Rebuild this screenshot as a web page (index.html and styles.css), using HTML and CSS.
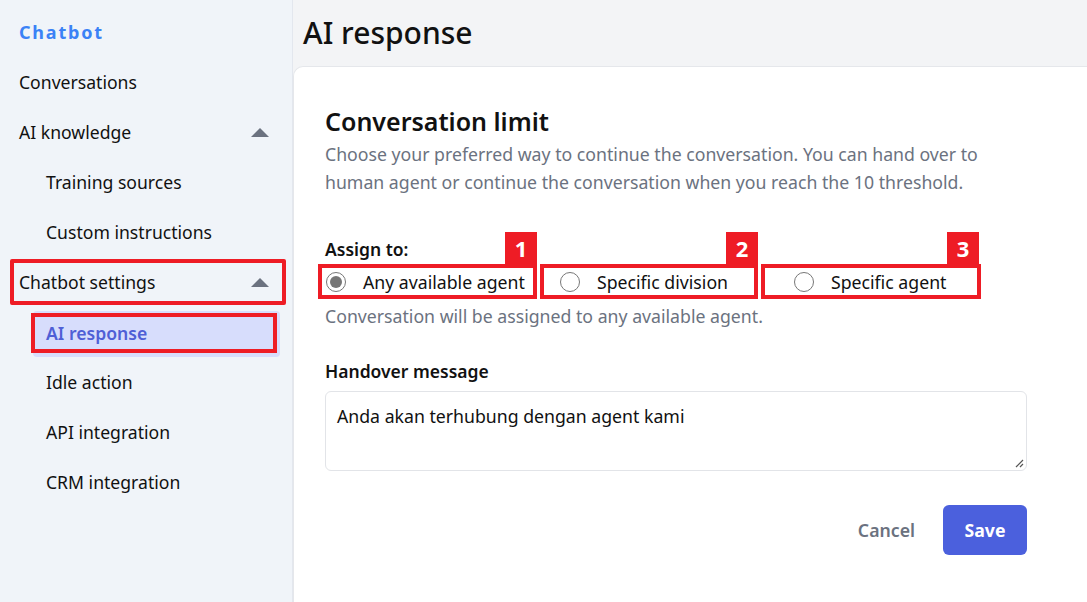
FILE: index.html
```html
<!DOCTYPE html>
<html>
<head>
<meta charset="utf-8">
<link rel="stylesheet" href="styles.css">
</head>
<body>
<div class="app">
  <aside class="sidebar">
    <div class="brand">Chatbot</div>
    <nav class="nav">
      <div class="item">Conversations</div>
      <div class="item">AI knowledge <span class="caret"></span></div>
      <div class="item sub">Training sources</div>
      <div class="item sub">Custom instructions</div>
      <div class="item annot-box">Chatbot settings <span class="caret"></span></div>
      <div class="item sub active"><span class="active-box">AI response</span></div>
      <div class="item sub">Idle action</div>
      <div class="item sub">API integration</div>
      <div class="item sub">CRM integration</div>
    </nav>
  </aside>
  <main class="main">
    <h1 class="page-title">AI response</h1>
    <section class="card">
      <h2 class="card-title">Conversation limit</h2>
      <p class="card-desc">Choose your preferred way to continue the conversation. You can hand over to human agent or continue the conversation when you reach the 10 threshold.</p>

      <div class="label assign-label">Assign to:</div>
      <div class="radios">
        <label class="radio r1"><span class="dot checked"></span>Any available agent<span class="badge">1</span></label>
        <label class="radio r2"><span class="dot"></span>Specific division<span class="badge">2</span></label>
        <label class="radio r3"><span class="dot"></span>Specific agent<span class="badge">3</span></label>
      </div>
      <p class="hint">Conversation will be assigned to any available agent.</p>

      <div class="label handover-label">Handover message</div>
      <div class="textarea">Anda akan terhubung dengan agent kami
        <svg class="grip" width="10" height="10" viewBox="0 0 10 10"><path d="M9 2 L2 9 M9 6 L6 9" stroke="#555" stroke-width="1.2" fill="none"/></svg>
      </div>

      <div class="actions">
        <button class="btn-cancel">Cancel</button>
        <button class="btn-save">Save</button>
      </div>
    </section>
  </main>
</div>
</body>
</html>
```
FILE: styles.css
```css
* { box-sizing: border-box; }
html, body { margin: 0; padding: 0; }
body {
  font-family: "Noto Sans", "Open Sans", sans-serif;
  color: #111;
  width: 1087px;
  height: 602px;
  overflow: hidden;
  background: #f3f4f6;
}
.app { display: flex; height: 602px; }

.sidebar {
  width: 293px;
  flex: none;
  background: #f0f4f9;
  border-right: 1px solid #e3e7ee;
  padding-top: 19px;
}
.brand {
  color: #3b82f6;
  font-weight: 700;
  font-size: 18px;
  letter-spacing: 1.8px;
  padding-left: 19px;
  line-height: 26px;
}
.nav { margin-top: 12px; display: flex; flex-direction: column; }
.item {
  height: 50px;
  display: flex;
  align-items: center;
  justify-content: space-between;
  padding: 0 23px 0 19px;
  font-size: 17.6px;
  color: #111;
  position: relative;
}
.item.sub { padding-left: 46px; }
.caret {
  width: 0; height: 0;
  border-left: 9px solid transparent;
  border-right: 9px solid transparent;
  border-bottom: 9px solid #6b7280;
}
.annot-box {
  margin: 2px 6px 2px 10px;
  padding: 0 13px 0 5px;
  height: 46px;
  border: 4px solid #ee1c25;
  border-radius: 2px;
}
.item.active {
  padding: 0;
  margin: 4px 12px 0 33px;
  height: 46px;
  background: #d7ddfc;
  border-radius: 4px;
  justify-content: flex-start;
  align-items: flex-start;
}
.active-box {
  display: flex;
  align-items: center;
  margin-left: -2px;
  margin-top: 2px;
  width: 246px;
  height: 40px;
  padding-left: 11px;
  border: 4px solid #ee1c25;
  color: #4f5fd6;
  font-weight: 600;
}

.main { flex: 1; display: flex; flex-direction: column; min-width: 0; }
.page-title {
  margin: 0;
  font-size: 30px;
  font-weight: 500;
  line-height: 34px;
  padding: 16px 0 16px 10px;
  color: #111;
}
.card {
  flex: 1;
  background: #fff;
  border-top: 1px solid #e5e7eb;
  border-left: 1px solid #e5e7eb;
  border-top-left-radius: 10px;
  padding: 37px 59px 0 31px;
  position: relative;
}
.card-title {
  margin: 0;
  font-size: 25px;
  font-weight: 600;
  line-height: 34px;
}
.card-desc {
  margin: 2px 0 0;
  font-size: 17.7px;
  line-height: 28px;
  color: #6b7280;
  max-width: 690px;
}
.label {
  font-size: 17.5px;
  font-weight: 600;
  color: #111;
  line-height: 24px;
}
.assign-label { margin-top: 41px; }
.radios {
  display: flex;
  margin-top: 3px;
  margin-left: -7px;
  gap: 3px;
}
.radio {
  position: relative;
  display: flex;
  align-items: center;
  height: 35px;
  border: 4px solid #ee1c25;
  font-size: 17.7px;
  color: #111;
}
.r1 { width: 219px; padding-left: 4px; }
.r2 { width: 218px; padding-left: 16px; }
.r3 { width: 220px; padding-left: 29px; }
.dot {
  width: 20px; height: 20px;
  border: 1.5px solid #777;
  border-radius: 50%;
  margin-right: 17px;
  flex: none;
  position: relative;
}
.dot.checked::after {
  content: "";
  position: absolute;
  inset: 3px;
  border-radius: 50%;
  background: #767676;
}
.badge {
  position: absolute;
  right: -4px;
  top: -36px;
  width: 32px;
  height: 32px;
  background: #ee1c25;
  color: #fff;
  font-weight: 700;
  font-size: 22px;
  display: flex;
  align-items: center;
  justify-content: center;
}
.r3 .badge { right: -2px; }
.hint {
  margin: 4px 0 0;
  font-size: 17.7px;
  color: #6b7280;
  line-height: 26px;
}
.handover-label { margin-top: 30px; }
.textarea {
  position: relative;
  margin-top: 8px;
  width: 702px;
  height: 80px;
  border: 1px solid #e2e4e8;
  border-radius: 6px;
  padding: 12px 11px;
  font-size: 17.7px;
  line-height: 24px;
  color: #111;
}
.grip { position: absolute; right: 2px; bottom: 2px; }
.actions {
  width: 702px;
  display: flex;
  justify-content: flex-end;
  align-items: center;
  gap: 28px;
  margin-top: 34px;
}
.btn-cancel {
  border: none;
  background: none;
  font-family: inherit;
  font-size: 17.7px;
  font-weight: 600;
  color: #6b7280;
  padding: 0;
}
.btn-save {
  border: none;
  background: #4b60dd;
  color: #fff;
  font-family: inherit;
  font-size: 17.7px;
  font-weight: 700;
  width: 84px;
  height: 50px;
  border-radius: 6px;
}
```
